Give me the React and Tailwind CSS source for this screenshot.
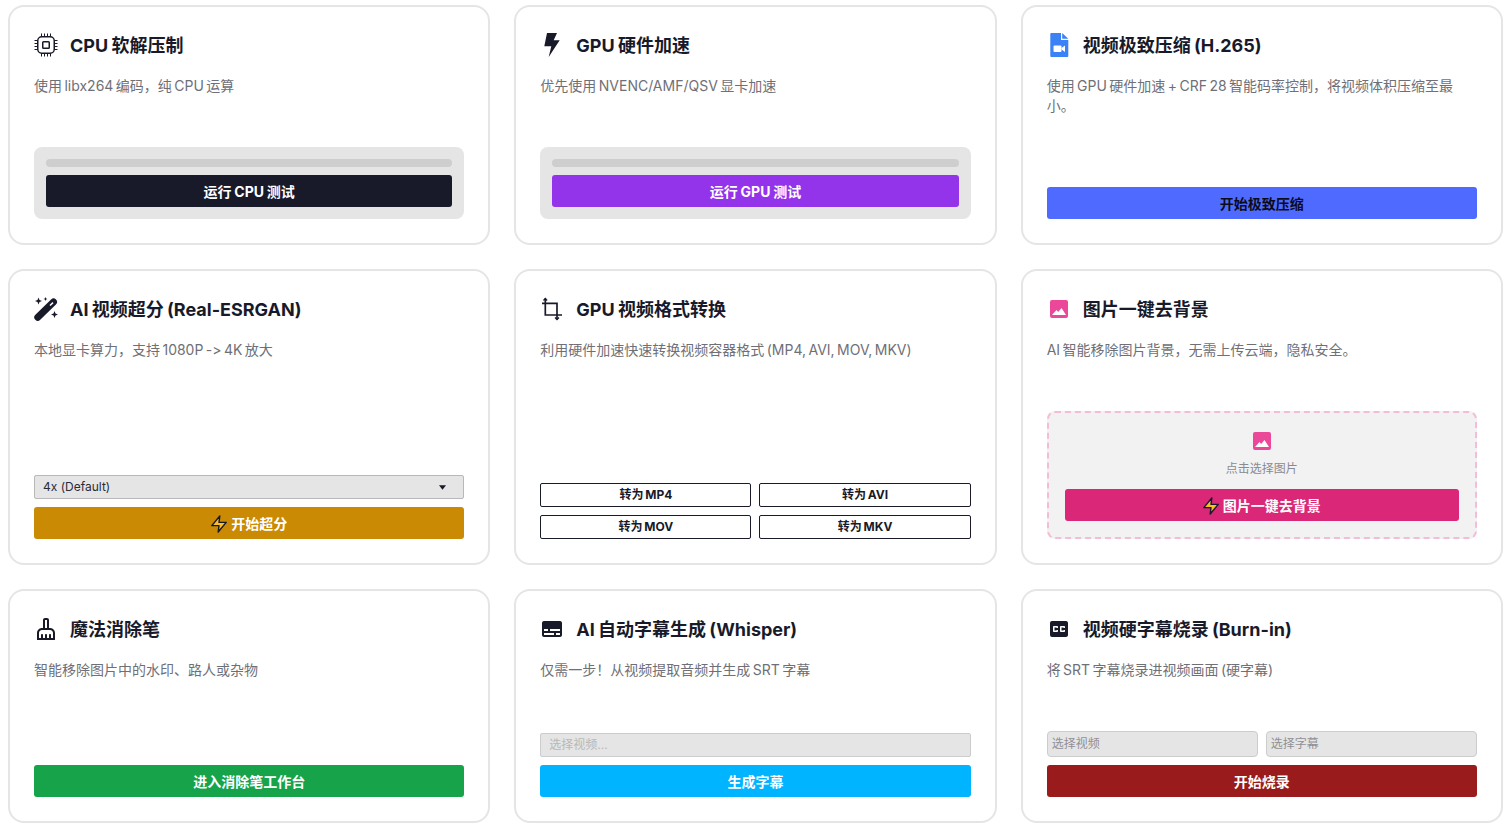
import React from "react";
import { MdOutlineCleaningServices, MdSubtitles, MdClosedCaption } from "react-icons/md";

const CpuIcon = () => (
  <svg viewBox="0 0 24 24" className="w-6 h-6 text-[#181a2a]" fill="none" stroke="currentColor" strokeWidth="1.500">
    <rect x="3.750" y="3.750" width="16.500" height="16.500" rx="4" />
    <rect x="8.750" y="8.750" width="6.500" height="6.500" rx="0.800" />
    <path d="M7.500 0.500v3M10.500 0.500v3M13.500 0.500v3M16.500 0.500v3M7.500 20.500v3M10.500 20.500v3M13.500 20.500v3M16.500 20.500v3M0.500 7.500h3M0.500 10.500h3M0.500 13.500h3M0.500 16.500h3M20.500 7.500h3M20.500 10.500h3M20.500 13.500h3M20.500 16.500h3" strokeWidth="1" />
  </svg>
);

const BoltIcon = () => (
  <svg viewBox="0 0 24 24" className="w-6 h-6 text-[#181a2a]" fill="currentColor">
    <path d="M7 0h10l-3.300 7.300h6L8.700 24l2.600-10.700H4.300z" />
  </svg>
);

const VideoFileIcon = () => (
  <svg viewBox="0 0 24 24" className="w-6 h-6">
    <path d="M4.300 0H14v7h7.300v16a1 1 0 0 1-1 1H4.300a1 1 0 0 1-1-1V1a1 1 0 0 1 1-1z" fill="#3b82f6" />
    <path d="M15.200 0l6.100 5.800h-6.100z" fill="#3b82f6" />
    <rect x="6.500" y="12.500" width="8" height="6.500" rx="1" fill="#fff" />
    <path d="M14.500 15l3.500-2.500v6.500L14.500 16.500z" fill="#fff" />
  </svg>
);

const WandIcon = () => (
  <svg viewBox="0 0 24 24" className="w-6 h-6 text-[#181a2a]">
    <path d="M3.800 20.200L19.500 5" stroke="currentColor" strokeWidth="7" strokeLinecap="round" />
    <path d="M16 8.500l3-2.900" stroke="#fff" strokeWidth="1.500" />
    <path d="M4.500 0.500l1 2.500 2.500 1-2.500 1-1 2.500-1-2.500-2.500-1 2.500-1zM11.500 0l0.600 1.400 1.400 0.600-1.400 0.600-0.600 1.400-0.600-1.400-1.400-0.600 1.400-0.600zM20.500 14l1 2.500 2.500 1-2.500 1-1 2.500-1-2.500-2.500-1 2.500-1z" fill="currentColor" />
  </svg>
);

const CropIcon = () => (
  <svg viewBox="0 0 24 24" className="w-6 h-6 text-[#181a2a]" fill="none" stroke="currentColor" strokeWidth="1.700">
    <path d="M5.300 1.500V18H22" />
    <path d="M2 6.300h15V22.500" />
    <path d="M3.500 3.500l1.800-2 1.800 2M15 20.500l2 2 2-2" strokeWidth="1.300" />
  </svg>
);

const ImageIcon = () => (
  <svg viewBox="0 0 24 24" className="w-6 h-6">
    <rect x="3" y="3" width="18" height="18" rx="2" fill="#ec4899" />
    <path d="M5 18l4.500-5 1.700 2 3.300-4 4.500 7z" fill="#fff" />
  </svg>
);

const Zap = () => (
  <svg viewBox="2 1 20 22" className="w-4 h-[18px] shrink-0" fill="#fbbf24" stroke="#181a2a" strokeWidth="1.800" strokeLinejoin="round">
    <path d="M13 2 3 14h9l-1 8 10-12h-9l1-8z" />
  </svg>
);

const Card = ({ icon, title, desc, children }) => (
  <div className="flex flex-col rounded-2xl border-2 border-[#e5e5e5] bg-white p-6">
    <div className="flex items-center gap-3 h-7">
      <span className="w-6 h-6 flex items-center justify-center shrink-0">{icon}</span>
      <h2 className="pt-[2px] text-lg font-bold text-[#181a2a] [word-spacing:-1px]">{title}</h2>
    </div>
    <p className="mt-[17px] text-sm leading-5 text-[#6f7077] [word-spacing:-1.5px]">{desc}</p>
    <div className="mt-auto">{children}</div>
  </div>
);

const Btn = ({ className, children }) => (
  <button className={`flex items-center justify-center gap-1 w-full h-8 pt-px rounded-[3px] text-sm font-bold [word-spacing:-0.5px] ${className}`}>
    {children}
  </button>
);

const FormatBtn = ({ label }) => (
  <button className="h-6 rounded-[2px] border border-[#181a2a] bg-white text-xs font-bold text-[#181a2a] [word-spacing:-1px]">
    {label}
  </button>
);

const Progress = ({ className, label }) => (
  <div className="rounded-lg bg-[#e5e5e5] p-3">
    <div className="h-2 rounded-full bg-[#cecece]" />
    <Btn className={`mt-2 text-white ${className}`}>{label}</Btn>
  </div>
);

const App = () => {
  return (
    <div className="grid grid-cols-3 grid-rows-[240px_296px_234px] gap-6 pl-2 pr-[9px] pt-[5px] pb-2 bg-white [font-family:Inter,'Noto_Sans_CJK_SC',sans-serif] [font-feature-settings:'calt'_0]">
      <Card icon={<CpuIcon />} title="CPU 软解压制" desc="使用 libx264 编码，纯 CPU 运算">
        <Progress className="bg-[#181a2a]" label="运行 CPU 测试" />
      </Card>

      <Card icon={<BoltIcon />} title="GPU 硬件加速" desc="优先使用 NVENC/AMF/QSV 显卡加速">
        <Progress className="bg-[#9333ea]" label="运行 GPU 测试" />
      </Card>

      <Card
        icon={<VideoFileIcon />}
        title="视频极致压缩 (H.265)"
        desc="使用 GPU 硬件加速 + CRF 28 智能码率控制，将视频体积压缩至最小。"
      >
        <Btn className="bg-[#4f6bff] text-[#0b0c1a]">开始极致压缩</Btn>
      </Card>

      <Card
        icon={<WandIcon />}
        title="AI 视频超分 (Real-ESRGAN)"
        desc="本地显卡算力，支持 1080P -> 4K 放大"
      >
        <div className="flex items-center justify-between h-6 px-2 rounded-[2px] border border-[#b8b8b8] bg-[#e5e5e5] text-xs text-[#2a2b38]">
          <span>4x (Default)</span>
          <svg viewBox="0 0 8 5" className="w-[7px] h-[5px] mr-[9px]" fill="#181a2a">
            <path d="M0 0h8L4 5z" />
          </svg>
        </div>
        <Btn className="mt-2 bg-[#ca8a04] text-white">
          <Zap />
          开始超分
        </Btn>
      </Card>

      <Card
        icon={<CropIcon />}
        title="GPU 视频格式转换"
        desc="利用硬件加速快速转换视频容器格式 (MP4, AVI, MOV, MKV)"
      >
        <div className="grid grid-cols-2 gap-2">
          <FormatBtn label="转为 MP4" />
          <FormatBtn label="转为 AVI" />
          <FormatBtn label="转为 MOV" />
          <FormatBtn label="转为 MKV" />
        </div>
      </Card>

      <Card
        icon={<ImageIcon />}
        title="图片一键去背景"
        desc="AI 智能移除图片背景，无需上传云端，隐私安全。"
      >
        <div className="flex flex-col items-center rounded-lg border-2 border-dashed border-[#f4bcd6] bg-[#f2f2f2] p-4">
          <ImageIcon />
          <span className="mt-2 text-xs text-[#8a8a90]">点击选择图片</span>
          <Btn className="mt-3 bg-[#db2777] text-white">
            <Zap />
            图片一键去背景
          </Btn>
        </div>
      </Card>

      <Card
        icon={<MdOutlineCleaningServices className="w-6 h-6 text-[#181a2a]" />}
        title="魔法消除笔"
        desc="智能移除图片中的水印、路人或杂物"
      >
        <Btn className="bg-[#16a34a] text-white">进入消除笔工作台</Btn>
      </Card>

      <Card
        icon={<MdSubtitles className="w-6 h-6 text-[#181a2a]" />}
        title="AI 自动字幕生成 (Whisper)"
        desc="仅需一步！从视频提取音频并生成 SRT 字幕"
      >
        <div className="flex items-center h-6 px-2 rounded-[2px] border border-[#cccccc] bg-[#e5e5e5] text-xs text-[#b8b8b8]">
          选择视频...
        </div>
        <Btn className="mt-2 bg-[#00b4ff] text-white">生成字幕</Btn>
      </Card>

      <Card
        icon={<MdClosedCaption className="w-6 h-6 text-[#181a2a]" />}
        title="视频硬字幕烧录 (Burn-in)"
        desc="将 SRT 字幕烧录进视频画面 (硬字幕)"
      >
        <div className="grid grid-cols-2 gap-2">
          <div className="flex items-center h-[26px] px-1 rounded-[4px] border border-[#cccccc] bg-[#e5e5e5] text-xs text-[#909096]">
            选择视频
          </div>
          <div className="flex items-center h-[26px] px-1 rounded-[4px] border border-[#cccccc] bg-[#e5e5e5] text-xs text-[#909096]">
            选择字幕
          </div>
        </div>
        <Btn className="mt-2 bg-[#991b1b] text-white">开始烧录</Btn>
      </Card>
    </div>
  );
};

export default App;
